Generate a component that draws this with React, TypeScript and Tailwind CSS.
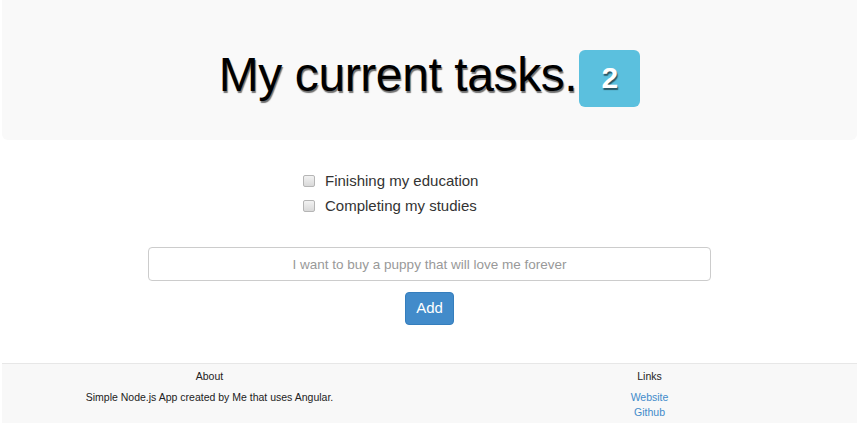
const tasks = ["Finishing my education", "Completing my studies"];

const App = () => {
  return (
    <div className="w-[861px] h-[436px] bg-white pl-[2px] pr-[4px] font-['Liberation_Sans',Arial,sans-serif] text-[#333]">
      <div className="h-[140px] bg-[#f9f9f9] rounded-b-[6px] flex items-center justify-center">
        <h1 className="flex items-center text-[48px] tracking-[-0.4px] leading-none text-black mt-[10px] [text-shadow:1px_2px_1px_rgba(0,0,0,0.55)]">
          My current tasks.
          <span className="ml-[2px] mt-[6px] w-[61px] h-[57px] rounded-[6px] bg-[#5bc0de] text-white font-bold text-[30px] tracking-normal flex items-center justify-center">
            2
          </span>
        </h1>
      </div>

      <div className="w-[563px] mx-auto pt-[32px]">
        <ul className="pl-[155px] flex flex-col gap-[7px]">
          {tasks.map((t) => (
            <li key={t} className="flex items-center gap-[10px] text-[15px] leading-[18px]">
              <input
                type="checkbox"
                className="appearance-none w-[12px] h-[12px] rounded-[2px] border border-[#b5b5b5] bg-gradient-to-b from-[#f2f2f2] to-[#d9d9d9]"
              />
              <span>{t}</span>
            </li>
          ))}
        </ul>

        <input
          className="mt-[32px] w-full h-[34px] border border-[#ccc] rounded-[4px] text-center text-[13.5px] placeholder:text-[#999] outline-none"
          placeholder="I want to buy a puppy that will love me forever"
        />

        <div className="flex justify-center mt-[11px]">
          <button className="w-[49px] h-[33px] rounded-[4px] bg-[#428bca] border border-[#357ebd] text-white text-[15px]">
            Add
          </button>
        </div>
      </div>

      <div className="mt-[38px] h-[60px] bg-[#f8f8f8] border-t border-[#e7e7e7] grid grid-cols-2 gap-[25px] text-[10.5px] text-[#222] text-center">
        <div className="pt-[5px]">
          <div>About</div>
          <div className="mt-[5px]">Simple Node.js App created by Me that uses Angular.</div>
        </div>
        <div className="pt-[5px]">
          <div>Links</div>
          <div className="mt-[5px] flex flex-col leading-[15px] text-[#428bca]">
            <a href="#">Website</a>
            <a href="#">Github</a>
          </div>
        </div>
      </div>
    </div>
  );
};

export default App;
